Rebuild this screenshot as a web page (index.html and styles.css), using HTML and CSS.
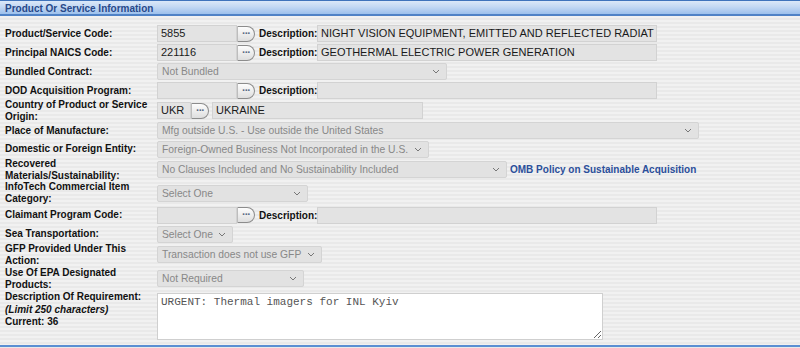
FILE: index.html
```html
<!DOCTYPE html>
<html lang="en">
<head>
  <meta charset="UTF-8">
  <title>Product Or Service Information</title>
  <link rel="stylesheet" href="styles.css">
</head>
<body>
  <div class="panel">
    <div class="panel-title">Product Or Service Information</div>
    <div class="form-grid">
      <div class="lbl">Product/Service Code:</div>
      <div class="ctl">
        <span class="inp w-code">5855</span><span class="btn-dots">&middot;&middot;&middot;</span>
        <span class="desc-lbl">Description:</span><span class="inp w-desc">NIGHT VISION EQUIPMENT, EMITTED AND REFLECTED RADIAT</span>
      </div>

      <div class="lbl">Principal NAICS Code:</div>
      <div class="ctl">
        <span class="inp w-code">221116</span><span class="btn-dots">&middot;&middot;&middot;</span>
        <span class="desc-lbl">Description:</span><span class="inp w-desc">GEOTHERMAL ELECTRIC POWER GENERATION</span>
      </div>

      <div class="lbl">Bundled Contract:</div>
      <div class="ctl">
        <span class="sel" style="width:290px">Not Bundled<svg class="chev" width="8" height="5" viewBox="0 0 8 5"><path d="M1 1l3 3 3-3" fill="none" stroke="#777" stroke-width="1"/></svg></span>
      </div>

      <div class="lbl">DOD Acquisition Program:</div>
      <div class="ctl">
        <span class="inp w-code"></span><span class="btn-dots">&middot;&middot;&middot;</span>
        <span class="desc-lbl">Description:</span><span class="inp w-desc"></span>
      </div>

      <div class="lbl">Country of Product or Service Origin:</div>
      <div class="ctl">
        <span class="inp w-cc">UKR</span><span class="btn-dots">&middot;&middot;&middot;</span>
        <span class="inp w-country">UKRAINE</span>
      </div>

      <div class="lbl">Place of Manufacture:</div>
      <div class="ctl">
        <span class="sel" style="width:542px">Mfg outside U.S. - Use outside the United States<svg class="chev" width="8" height="5" viewBox="0 0 8 5"><path d="M1 1l3 3 3-3" fill="none" stroke="#777" stroke-width="1"/></svg></span>
      </div>

      <div class="lbl">Domestic or Foreign Entity:</div>
      <div class="ctl">
        <span class="sel" style="width:272px">Foreign-Owned Business Not Incorporated in the U.S.<svg class="chev" width="8" height="5" viewBox="0 0 8 5"><path d="M1 1l3 3 3-3" fill="none" stroke="#777" stroke-width="1"/></svg></span>
      </div>

      <div class="lbl">Recovered Materials/Sustainability:</div>
      <div class="ctl">
        <span class="sel" style="width:350px">No Clauses Included and No Sustainability Included<svg class="chev" width="8" height="5" viewBox="0 0 8 5"><path d="M1 1l3 3 3-3" fill="none" stroke="#777" stroke-width="1"/></svg></span>
        <a class="policy-link" href="#">OMB Policy on Sustainable Acquisition</a>
      </div>

      <div class="lbl">InfoTech Commercial Item Category:</div>
      <div class="ctl">
        <span class="sel" style="width:151px">Select One<svg class="chev" width="8" height="5" viewBox="0 0 8 5"><path d="M1 1l3 3 3-3" fill="none" stroke="#777" stroke-width="1"/></svg></span>
      </div>

      <div class="lbl">Claimant Program Code:</div>
      <div class="ctl">
        <span class="inp w-code"></span><span class="btn-dots">&middot;&middot;&middot;</span>
        <span class="desc-lbl">Description:</span><span class="inp w-desc"></span>
      </div>

      <div class="lbl">Sea Transportation:</div>
      <div class="ctl">
        <span class="sel" style="width:76px">Select One<svg class="chev" width="8" height="5" viewBox="0 0 8 5"><path d="M1 1l3 3 3-3" fill="none" stroke="#777" stroke-width="1"/></svg></span>
      </div>

      <div class="lbl">GFP Provided Under This Action:</div>
      <div class="ctl">
        <span class="sel" style="width:165px">Transaction does not use GFP<svg class="chev" width="8" height="5" viewBox="0 0 8 5"><path d="M1 1l3 3 3-3" fill="none" stroke="#777" stroke-width="1"/></svg></span>
      </div>

      <div class="lbl">Use Of EPA Designated Products:</div>
      <div class="ctl">
        <span class="sel" style="width:147px">Not Required<svg class="chev" width="8" height="5" viewBox="0 0 8 5"><path d="M1 1l3 3 3-3" fill="none" stroke="#777" stroke-width="1"/></svg></span>
      </div>

      <div class="lbl top">Description Of Requirement:<br><i>(Limit 250 characters)</i><br>Current: 36</div>
      <div class="ctl top">
        <textarea class="req-text">URGENT: Thermal imagers for INL Kyiv</textarea>
      </div>
    </div>
  </div>
</body>
</html>
```

FILE: styles.css
```css
body {
  margin: 0;
  font-family: "Liberation Sans", Arial, Helvetica, sans-serif;
  font-size: 10px;
  color: #111;
  background: repeating-linear-gradient(to bottom, #f1f1f1 0, #f1f1f1 2px, #e9e9e9 2px, #e9e9e9 4px);
  height: 348px;
  overflow: hidden;
}

.panel {
  height: 347px;
  border-bottom: 2px solid #5b8fd3;
  box-sizing: border-box;
}

.panel-title {
  height: 16px;
  box-sizing: border-box;
  padding: 2px 0 0 5px;
  border-top: 1px solid #3f73bb;
  border-bottom: 2px solid #4f82c6;
  background: linear-gradient(to bottom, #dbe8f8 0%, #c3d8f3 45%, #9cc0ec 100%);
  color: #27498a;
  font-weight: bold;
  font-size: 10px;
}

.form-grid {
  display: grid;
  grid-template-columns: 152px 1fr;
  grid-template-rows: 19px 19px 19px 19px 21px 19px 18px 23px 24px 20px 18px 23px 25px 50px;
  align-items: center;
  padding: 8px 0 0 5px;
}

.lbl {
  font-weight: bold;
  line-height: 12px;
}

.lbl.top {
  align-self: start;
  line-height: 12.5px;
}

.ctl {
  display: flex;
  align-items: center;
}

.ctl.top {
  align-self: start;
  padding-top: 2px;
}

.inp {
  display: inline-block;
  height: 17px;
  box-sizing: border-box;
  background: #e3e3e3;
  border: 1px solid #d2d2d2;
  padding: 0 3px;
  font-size: 11px;
  line-height: 15px;
  color: #1a1a1a;
  white-space: nowrap;
  overflow: hidden;
}

.w-code { width: 80px; }
.w-desc { width: 340px; }
.w-cc { width: 34px; }
.w-country { width: 211px; margin-left: 3px; }

.btn-dots {
  display: inline-block;
  width: 18px;
  height: 16px;
  box-sizing: border-box;
  border: 1px solid #8c8c8c;
  border-left-color: #bdbdbd;
  border-radius: 0 8px 8px 0;
  background: linear-gradient(to bottom, #fdfdfd, #dedede);
  color: #5a6b86;
  font-size: 11px;
  font-weight: bold;
  line-height: 12px;
  text-align: center;
  letter-spacing: -1px;
}

.desc-lbl {
  font-weight: bold;
  margin-left: 4px;
  width: 58px;
}

.sel {
  display: inline-flex;
  align-items: center;
  height: 17px;
  box-sizing: border-box;
  padding: 0 6px 0 4px;
  background: #e2e2e2;
  border: 1px solid #d4d4d4;
  border-radius: 2px;
  color: #888;
  font-size: 10.3px;
  white-space: nowrap;
  overflow: hidden;
}

.chev {
  margin-left: auto;
  flex: none;
  padding-left: 4px;
}

.policy-link {
  margin-left: 3px;
  color: #2b4f9b;
  font-weight: bold;
  text-decoration: none;
}

.req-text {
  width: 446px;
  height: 47px;
  box-sizing: border-box;
  margin: 0;
  padding: 2px 3px;
  border: 1px solid #cfcfcf;
  background: #fff;
  font-family: "Liberation Mono", "DejaVu Sans Mono", monospace;
  font-size: 11px;
  color: #555;
  resize: both;
}
```
